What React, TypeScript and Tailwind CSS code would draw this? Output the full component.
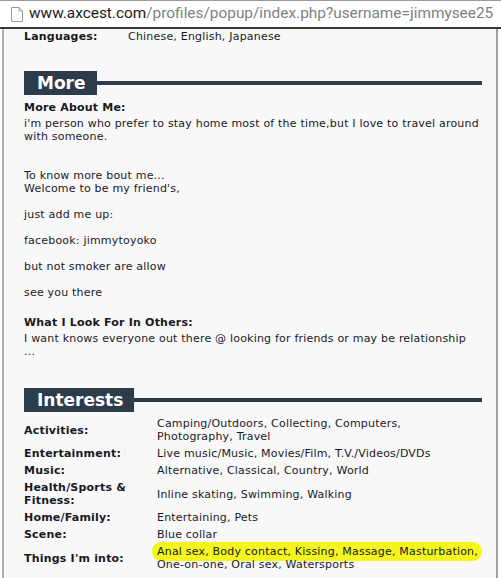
import React from 'react';

const Header = ({ title, className }: { title: string; className: string }) => (
    <div className={`flex items-center ${className}`}>
        <div className="bg-[#2e3b4b] text-white font-bold text-[17px] leading-[24px] h-[24px] pl-[13px] pr-[11px] tracking-normal">
            {title}
        </div>
        <div className="flex-1 h-[4px] bg-[#2e3b4b]"></div>
    </div>
);

const rows: { label: string[]; value: string[]; mark?: boolean }[] = [
    { label: ['Activities:'], value: ['Camping/Outdoors, Collecting, Computers,', 'Photography, Travel'] },
    { label: ['Entertainment:'], value: ['Live music/Music, Movies/Film, T.V./Videos/DVDs'] },
    { label: ['Music:'], value: ['Alternative, Classical, Country, World'] },
    { label: ['Health/Sports &', 'Fitness:'], value: ['Inline skating, Swimming, Walking'] },
    { label: ['Home/Family:'], value: ['Entertaining, Pets'] },
    { label: ['Scene:'], value: ['Blue collar'] },
    { label: ["Things I'm into:"], value: ['Anal sex, Body contact, Kissing, Massage, Masturbation,', 'One-on-one, Oral sex, Watersports'], mark: true },
];

export default function App() {
    return (
        <div className="w-[501px] h-[578px] overflow-hidden flex flex-col bg-white font-['DejaVu_Sans',Verdana,sans-serif] text-[11px] leading-[13px] tracking-[0.2px] text-[#18181f]">
            <div className="h-[29px] shrink-0 flex items-center border-t border-[#9a9a9a] border-b-2 border-b-[#3a3a3a] bg-white pl-[11px] overflow-hidden">
                <svg width="12" height="15" viewBox="0 0 12 15" className="mr-[6px] shrink-0">
                    <path d="M0.5 0.5 H8 L11.5 4 V14.5 H0.5 Z" fill="#fff" stroke="#9a9a9a" />
                    <path d="M8 0.5 V4 H11.5" fill="none" stroke="#9a9a9a" />
                </svg>
                <span className="font-['Roboto',sans-serif] text-[15.4px] tracking-normal leading-none whitespace-nowrap">
                    <span className="text-[#1a1a1a]">www.axcest.com</span>
                    <span className="text-[#808080]">/profiles/popup/index.php?username=jimmysee25</span>
                </span>
            </div>
            <div className="flex-1 mx-[2px] w-[496px] border-l-2 border-r-2 border-l-[#b0b0b0] border-r-[#a0a0a0] bg-[#f8f8f8] pl-[20px] pr-[14px]">
                <div className="flex pt-[1px]">
                    <div className="w-[104px] font-bold">Languages:</div>
                    <div>Chinese, English, Japanese</div>
                </div>

                <Header title="More" className="mt-[28px] mb-[6px]" />

                <div className="font-bold">More About Me:</div>
                <p className="mt-[3px]">i'm person who prefer to stay home most of the time,but I love to travel around with someone.</p>
                <p className="mt-[26px]">To know more bout me...<br />Welcome to be my friend's,</p>
                <p className="mt-[13px]">just add me up:</p>
                <p className="mt-[13px]">facebook: jimmytoyoko</p>
                <p className="mt-[13px]">but not smoker are allow</p>
                <p className="mt-[13px]">see you there</p>
                <div className="font-bold mt-[17px]">What I Look For In Others:</div>
                <p className="mt-[3px]">I want knows everyone out there @ looking for friends or may be relationship<br />...</p>

                <Header title="Interests" className="mt-[30px] mb-[3px]" />

                <div className="flex flex-col">
                    {rows.map((r) => (
                        <div key={r.label[0]} className="flex items-center py-[2px]">
                            <div className="w-[133px] font-bold shrink-0">
                                {r.label.map((l) => (
                                    <div key={l}>{l}</div>
                                ))}
                            </div>
                            <div className="relative">
                                {r.mark && (
                                    <div className="absolute left-[-5px] right-[-4px] top-[-3px] h-[19px] bg-[#f5f51e] rounded-[9px] blur-[0.6px]"></div>
                                )}
                                {r.value.map((v) => (
                                    <div key={v} className="relative">{v}</div>
                                ))}
                            </div>
                        </div>
                    ))}
                </div>
            </div>
        </div>
    );
}
